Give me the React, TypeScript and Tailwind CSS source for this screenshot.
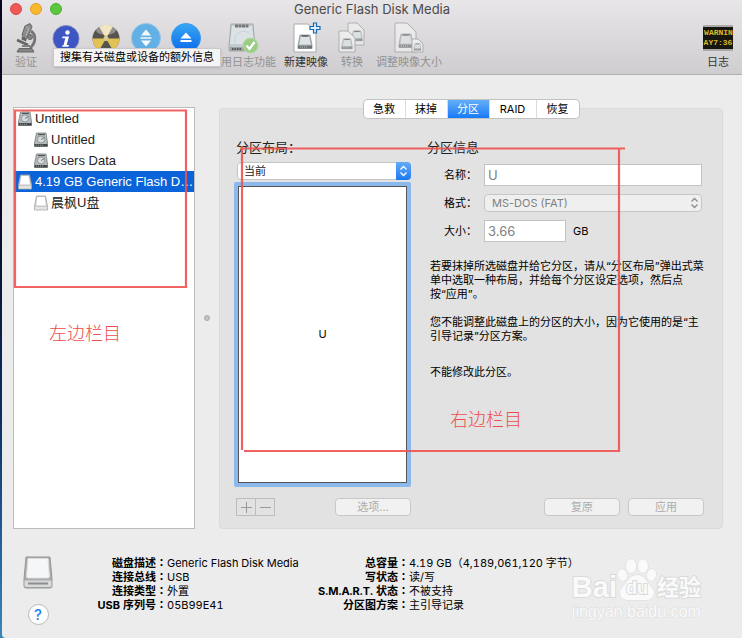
import type { ReactNode } from 'react'

function MicroscopeIcon() {
  return (
    <svg width="26" height="30" viewBox="0 0 26 30" fill="none">
      <path d="M12 3l5-2.500 2 3-4.500 11-5.500-2.500z" fill="#8d8d8d" stroke="#666" />
      <path d="M13 4l3 1.500-3.500 8" stroke="#b5b5b5" />
      <path d="M9 13l5 2-1 3.500-4.500-2z" fill="#666" />
      <path d="M18 8c5.500 4 5 12-1 17" stroke="#757575" strokeWidth="2.800" />
      <circle cx="17" cy="14" r="2.500" fill="#858585" stroke="#666" />
      <path d="M4 17l11 5" stroke="#666" strokeWidth="2.500" />
      <path d="M9 23h8" stroke="#808080" strokeWidth="2" />
      <path d="M4 29l2-3.500h13l2 3.500z" fill="#858585" stroke="#666" />
    </svg>
  )
}

function InfoIcon() {
  return (
    <svg width="28" height="30" viewBox="0 0 28 30">
      <circle cx="14" cy="15.500" r="13" fill="#3d56c4" stroke="#7887bd" />
      <circle cx="15.500" cy="9.500" r="2.200" fill="#fff" />
      <path d="M10.500 13.500h6.500l-2.300 8.500h2.300l-.5 1.800h-6.500l.5-1.500h1l1.800-7h-3.200z" fill="#fff" />
    </svg>
  )
}

function BurnIcon() {
  return (
    <svg width="28" height="30" viewBox="0 0 28 30">
      <circle cx="14" cy="15.500" r="13.500" fill="#56544f" />
      <path d="M14 15.500L7.200 3.800a13.500 13.500 0 0113.600 0z" fill="#ecd9a2" />
      <path d="M14 15.500h13.500a13.500 13.500 0 01-6.700 11.700z" fill="#e2c155" />
      <path d="M14 15.500H.5a13.500 13.500 0 006.700 11.700z" fill="#e2c155" />
      <ellipse cx="14" cy="7" rx="10" ry="5" fill="#fff" opacity=".35" />
      <circle cx="14" cy="15.500" r="2.500" fill="#d9cb91" />
    </svg>
  )
}

function MountIcon() {
  return (
    <svg width="30" height="30" viewBox="0 0 30 30">
      <circle cx="15" cy="15" r="14.500" fill="#62b0e4" stroke="#92c6e8" />
      <path d="M10 12.500l5-6 5 6zM10 17.500l5 6 5-6z" fill="#f3f9fd" />
      <path d="M9.500 15h11" stroke="#f3f9fd" strokeWidth="1.500" />
    </svg>
  )
}

function EjectIcon() {
  return (
    <svg width="30" height="30" viewBox="0 0 30 30">
      <defs>
        <linearGradient id="eject" x2="0" y2="1">
          <stop stopColor="#37a8f5" />
          <stop offset="1" stopColor="#0967ea" />
        </linearGradient>
      </defs>
      <circle cx="15" cy="15" r="14.500" fill="url(#eject)" stroke="#3c97e5" />
      <path d="M9.500 15.500l5.500-6 5.500 6z" fill="#fff" />
      <path d="M9.500 18h11" stroke="#fff" strokeWidth="2" />
    </svg>
  )
}

// internal drive seen from the front, drawn in a 16x16 box
function DriveShape() {
  return (
    <>
      <path d="M3 1h10l2 10v3.500H1V11z" fill="#b5bdc0" stroke="#8d9598" strokeWidth=".8" />
      <path d="M4 2h8l1.500 8.500h-11z" fill="#dfe5e7" />
      <path d="M4.500 2h7" stroke="#555" strokeWidth="1.500" />
      <path d="M1 11.500h14v3H1z" fill="#6d7477" />
      <path d="M3 13h8" stroke="#b9bfc2" strokeDasharray="1 1" />
    </>
  )
}

function JournalIcon() {
  return (
    <svg width="32" height="32" viewBox="0 0 32 32">
      <path d="M4 2h22l2 22v5H2v-5z" fill="#c4cbcd" stroke="#a4aaac" />
      <path d="M5 4h20l2 18H3z" fill="#dce3e6" />
      <path d="M8 4h14" stroke="#777" strokeWidth="3" strokeDasharray="3 .5" />
      <path d="M8 21a9 9 0 0115-9" stroke="#cbd3d6" fill="none" />
      <path d="M3 25h14v4H3z" fill="#9da2a4" />
      <path d="M5 27h10" stroke="#555" strokeWidth="2" strokeDasharray="1.500 1" />
      <circle cx="23.500" cy="23.500" r="7.500" fill="#9bce84" stroke="#b6d8a6" />
      <path d="M19.500 23.500l3 3.500 5-7" stroke="#fff" strokeWidth="2.200" fill="none" />
    </svg>
  )
}

function NewImageIcon() {
  return (
    <svg width="30" height="32" viewBox="0 0 30 32">
      <path d="M3 2h14l8 8v20H3z" fill="#fff" stroke="#aaa" />
      <g transform="translate(6 12)">
        <DriveShape />
      </g>
      <path d="M22.500 1h3v3.500H29v3h-3.500V11h-3V7.500H19v-3h3.500z" fill="#d9efff" stroke="#1767ad" strokeWidth="1.200" />
    </svg>
  )
}

function ConvertIcon() {
  return (
    <svg width="28" height="32" viewBox="0 0 28 32" opacity=".65">
      <path d="M10 1h9l7 7v15H10z" fill="#f3f3f3" stroke="#999" />
      <g transform="translate(13 8) scale(.75)">
        <DriveShape />
      </g>
      <path d="M1 9h9l7 7v14H1z" fill="#f7f7f7" stroke="#999" />
      <g transform="translate(3 16) scale(.75)">
        <DriveShape />
      </g>
    </svg>
  )
}

function ResizeIcon() {
  return (
    <svg width="30" height="32" viewBox="0 0 30 32" opacity=".65">
      <path d="M1 1h12l9 9v20H1z" fill="#f3f3f3" stroke="#999" />
      <g transform="translate(4 11)">
        <DriveShape />
      </g>
      <path d="M18 17h6l5 5v8H18z" fill="#f7f7f7" stroke="#999" />
      <g transform="translate(19.500 21) scale(.5)">
        <DriveShape />
      </g>
    </svg>
  )
}

function LogIcon() {
  return (
    <div className="flex h-[26px] w-[30px] flex-col justify-center overflow-hidden border-y-2 border-[#aaa] bg-[#17170f] font-['Liberation_Mono',monospace] text-[8px] leading-[10px] font-bold whitespace-nowrap text-[#d9b92b]">
      <span className="pl-px">WARNIN</span>
      <span>AY7:36</span>
    </div>
  )
}

function HardDiskIcon() {
  return (
    <svg width="14" height="16" viewBox="0 0 14 16" className="shrink-0">
      <path d="M2.500 1h9.500l1.500 10v3.500H.5V11z" fill="#b3b9bb" stroke="#7a8082" strokeWidth=".8" />
      <path d="M4 2.500h7" stroke="#555" strokeWidth="1.200" />
      <circle cx="7" cy="7.500" r="3.500" fill="#d8dddf" stroke="#878e91" strokeWidth=".8" />
      <path d="M7 7.500l3.500-2" stroke="#777" />
      <path d="M.5 12h13v2.500H.5z" fill="#45494a" />
      <path d="M2 13.200h7" stroke="#9aa0a2" strokeDasharray="1 1" />
    </svg>
  )
}

function FlashIcon() {
  return (
    <svg width="14" height="16" viewBox="0 0 14 16" className="shrink-0">
      <path d="M2.500 1h9l2 10v4H.5v-4z" fill="#c9c9c9" stroke="#aaa" strokeWidth=".8" />
      <path d="M3.300 2h7.400l1.200 8.500H2.100z" fill="#fff" />
      <path d="M1 12h12v2.500H1z" fill="#e4e4e4" />
    </svg>
  )
}

function ExternalDiskIcon() {
  return (
    <svg width="30" height="34" viewBox="0 0 30 34">
      <path d="M3 1h24l2 22v7q0 2-2 2H3q-2 0-2-2v-7z" fill="#a9abac" stroke="#949697" />
      <path d="M5 2.500h20l1.500 18q0 1.500-2 1.500h-19q-2 0-2-1.500z" fill="#f4f6f7" stroke="#dedede" />
      <path d="M1.500 24.500h27v5q0 1.500-1.500 1.500H3q-1.500 0-1.500-1.500z" fill="#d8d9da" />
      <path d="M5 27.500h20" stroke="#8b8d8e" strokeWidth="2" />
    </svg>
  )
}

type ToolProps = { label: string; icon: ReactNode; width?: string; enabled?: boolean; covered?: boolean }

function Tool({ label, icon, width = 'w-10', enabled, covered }: ToolProps) {
  return (
    <button
      aria-label={label}
      className={`flex shrink-0 flex-col items-center text-[11px] leading-4 whitespace-nowrap ${width} ${
        enabled ? 'text-[#333]' : 'text-[#929292]'
      }`}
    >
      <span className="flex h-8 items-center">{icon}</span>
      {!covered && label}
    </button>
  )
}

const DISKS = [
  { name: 'Untitled', icon: <HardDiskIcon /> },
  { name: 'Untitled', icon: <HardDiskIcon />, child: true },
  { name: 'Users Data', icon: <HardDiskIcon />, child: true },
  { name: '4.19 GB Generic Flash D…', icon: <FlashIcon />, selected: true },
  { name: '晨枫U盘', icon: <FlashIcon />, child: true },
]

const TABS = ['急救', '抹掉', '分区', 'RAID', '恢复']

const DISK_INFO = [
  ['磁盘描述', 'Generic Flash Disk Media'],
  ['连接总线', 'USB'],
  ['连接类型', '外置'],
  ['USB 序列号', '05B99E41'],
]

const VOLUME_INFO = [
  ['总容量', '4.19 GB（4,189,061,120 字节）'],
  ['写状态', '读/写'],
  ['S.M.A.R.T. 状态', '不被支持'],
  ['分区图方案', '主引导记录'],
]

function InfoList({ rows, columns }: { rows: string[][]; columns: string }) {
  return (
    <dl className={`grid auto-rows-[14px] content-start text-[11px] leading-[14px] whitespace-nowrap tabular-nums ${columns}`}>
      {rows.map(([label, value]) => (
        <div key={label} className="contents">
          <dt className="text-right font-bold">
            {label}
            <span lang="zh-TW" className="font-[Inter,'Noto_Sans_CJK_TC',sans-serif]">：</span>
          </dt>
          <dd>{value}</dd>
        </div>
      ))}
    </dl>
  )
}

function DisabledButton({ children }: { children: ReactNode }) {
  return (
    <button disabled className="h-[18px] w-[76px] rounded-[4px] border border-[#c8c8c8] bg-[#f1f1f1] text-[11px] leading-4 text-[#acacac]">
      {children}
    </button>
  )
}

function Chevrons({ className }: { className: string }) {
  return (
    <svg width="9" height="12" viewBox="0 0 9 12" fill="none" stroke="currentColor" strokeWidth="1.300" className={className}>
      <path d="M1.500 4.500l3-3 3 3M1.500 7.500l3 3 3-3" />
    </svg>
  )
}

function LayoutColumn() {
  return (
    <section className="flex w-[177px] shrink-0 flex-col">
      <label htmlFor="layout" className="ml-0.5 text-[13px] leading-4 text-[#222]">
        分区布局：
      </label>
      <div className="relative mt-[7px] ml-[3px]">
        <select id="layout" className="block h-[18px] w-full appearance-none rounded-[4px] border border-[#c4c4c4] bg-white pl-1.5 text-[11px] leading-4 text-[#222]">
          <option>当前</option>
        </select>
        <span className="pointer-events-none absolute inset-y-0 right-0 flex w-[15px] items-center justify-center rounded-r-[4px] bg-linear-to-b from-[#62abf8] to-[#1a78f2]">
          <Chevrons className="text-white" />
        </span>
      </div>
      <div className="mt-0.5 flex h-[305px] rounded-[2px] border-4 border-[#8bb9ec]">
        <div className="flex flex-1 items-center justify-center border border-[#555] bg-white text-[11px]">U</div>
      </div>
      <div className="mt-[11px] flex justify-between pl-0.5">
        <div className="flex">
          <button aria-label="添加分区" disabled className="flex h-[18px] w-5 items-center justify-center border border-[#bdbdbd] text-[#999]">
            <svg width="11" height="11" stroke="currentColor">
              <path d="M0 5.500h11M5.500 0v11" />
            </svg>
          </button>
          <button aria-label="移除分区" disabled className="-ml-px flex h-[18px] w-5 items-center justify-center border border-[#bdbdbd] text-[#999]">
            <svg width="11" height="11" stroke="currentColor">
              <path d="M0 5.500h11" />
            </svg>
          </button>
        </div>
        <DisabledButton>选项…</DisabledButton>
      </div>
    </section>
  )
}

function DetailsColumn() {
  return (
    <section className="flex min-w-0 flex-1 flex-col">
      <h2 className="text-[13px] leading-4 text-[#222]">分区信息</h2>
      <div className="mt-[9px] mr-0.5 grid grid-cols-[50px_1fr] items-center gap-x-[7px] gap-y-2 text-[11px]">
        <label htmlFor="name" className="text-right">名称：</label>
        <input id="name" readOnly value="U" className="h-[22px] w-full min-w-0 border border-[#c3c3c3] bg-white px-[3px] text-[13px] text-[#808080]" />
        <label htmlFor="format" className="text-right">格式：</label>
        <div className="relative">
          <select id="format" disabled className="block h-[18px] w-full appearance-none rounded-[4px] border border-[#c6c6c6] bg-[#efefef] pl-[7px] leading-4 text-[#808080] opacity-100">
            <option>MS-DOS (FAT)</option>
          </select>
          <Chevrons className="pointer-events-none absolute top-[3px] right-[3px] text-[#8c8c8c]" />
        </div>
        <label htmlFor="size" className="text-right">大小：</label>
        <div className="flex items-center gap-[7px]">
          <input id="size" readOnly value="3.66" className="h-[22px] w-[82px] border border-[#c3c3c3] bg-white px-[3px] text-[13px] text-[#808080]" />
          <span>GB</span>
        </div>
      </div>
      <div className="mt-[17px] ml-[3px] text-[11px] leading-[14px]">
        <p>
          若要抹掉所选磁盘并给它分区，请从“分区布局”弹出式菜单中选取一种布局，并给每个分区设定选项，然后点
          <span className="whitespace-nowrap">按“应用”。</span>
        </p>
        <p className="mt-3.5">您不能调整此磁盘上的分区的大小，因为它使用的是“主引导记录”分区方案。</p>
        <p className="mt-[22px]">不能修改此分区。</p>
      </div>
      <div className="mt-auto flex justify-end gap-2">
        <DisabledButton>复原</DisabledButton>
        <DisabledButton>应用</DisabledButton>
      </div>
    </section>
  )
}

function Annotations() {
  return (
    <div className="pointer-events-none absolute inset-0 text-[18px] leading-6 font-light text-[#ee4c4c]">
      <svg width="742" height="638" viewBox="0 0 742 638" fill="none" stroke="#ef5350" strokeWidth="2.200" className="absolute top-0 left-0" opacity=".9">
        <path d="M15 110.500h171V287H15z" />
        <path d="M242 148.500h383M619 148.500V451H244M242 146v304" />
      </svg>
      <span className="absolute top-[322px] left-[49px]">左边栏目</span>
      <span className="absolute top-[408px] left-[450px]">右边栏目</span>
    </div>
  )
}

function Watermark() {
  return (
    <div className="pointer-events-none absolute right-[41px] bottom-4 flex flex-col items-start font-bold text-[#fafafa] [-webkit-text-stroke:2px_#dadada] [paint-order:stroke_fill]">
      <div className="flex items-end">
        <span className="font-['Liberation_Sans',sans-serif] text-[29px] leading-[30px]">Bai</span>
        <div className="relative h-[44px] w-10">
          <svg width="40" height="44" viewBox="0 0 40 44" fill="#fafafa" stroke="#dadada">
            <ellipse cx="5.500" cy="17" rx="4.500" ry="6" transform="rotate(-15 5.500 17)" />
            <ellipse cx="14" cy="8" rx="5" ry="7" />
            <ellipse cx="26" cy="8" rx="5" ry="7" />
            <ellipse cx="34.500" cy="17" rx="4.500" ry="6" transform="rotate(15 34.500 17)" />
            <path d="M20 17c6 0 8 4 11 8s7 6 6 11c-1 5-5 6-9 6H12c-5 0-8-2-9-6s3-7 6-11 5-8 11-8z" />
          </svg>
          <span className="absolute inset-x-0 bottom-1 text-center font-['Liberation_Sans',sans-serif] text-[18px] leading-5">du</span>
        </div>
        <span className="text-[22px] leading-[30px]">经验</span>
      </div>
      <span className="font-['Liberation_Sans',sans-serif] text-[16px] leading-5 font-normal [-webkit-text-stroke:1px_#dcdcdc]">jingyan.baidu.com</span>
    </div>
  )
}

export default function App() {
  return (
    <div
      lang="zh-CN"
      className="relative flex min-h-screen bg-linear-to-b from-[#070720] from-30% via-[#0a3065] via-65% to-[#3b86b8] pl-0.5 font-[Inter,'Noto_Sans_CJK_SC',sans-serif] text-black"
    >
      <div className="flex min-w-0 flex-1 flex-col rounded-bl-[4px] bg-[#ececec]">
        <header className="relative h-[75px] border-b border-[#b0b0b0] bg-linear-to-b from-[#e8e6e8] to-[#cfcdcf]">
          <div className="relative flex h-[22px] items-start justify-center">
            <div className="absolute top-[3px] left-2 flex gap-2">
              <button aria-label="关闭" className="size-3 rounded-full border border-[#d84a47] bg-[#ee5a55]" />
              <button aria-label="最小化" className="size-3 rounded-full border border-[#dfa023] bg-[#f8b82e]" />
              <button aria-label="缩放" className="size-3 rounded-full border border-[#4aae31] bg-[#5cc83e]" />
            </div>
            <h1 className="text-[13px] leading-[19px] text-[#4b4b4b]">Generic Flash Disk Media</h1>
          </div>
          <div className="flex pl-1">
            <Tool label="验证" icon={<MicroscopeIcon />} />
            <Tool label="简介" icon={<InfoIcon />} covered />
            <Tool label="刻录" icon={<BurnIcon />} covered />
            <Tool label="装载" icon={<MountIcon />} covered />
            <Tool label="推出" icon={<EjectIcon />} covered />
            <Tool label="启用日志功能" icon={<JournalIcon />} width="w-[74px]" />
            <Tool label="新建映像" icon={<NewImageIcon />} width="w-[52px]" enabled />
            <Tool label="转换" icon={<ConvertIcon />} />
            <Tool label="调整映像大小" icon={<ResizeIcon />} width="w-[74px]" />
            <div className="ml-auto">
              <Tool label="日志" icon={<LogIcon />} width="w-12" enabled />
            </div>
          </div>
          <div role="tooltip" className="absolute top-12 left-[51px] border border-[#c9c9c9] bg-[#f4f4f4] px-1.5 text-[11px] leading-[17px] whitespace-nowrap shadow-sm">
            搜集有关磁盘或设备的额外信息
          </div>
        </header>

        <main className="flex pt-8 pr-[19px] pl-[11px]">
          <ul className="w-[182px] shrink-0 border border-[#bcbcbc] bg-white font-['Liberation_Sans','Noto_Sans_CJK_SC',sans-serif] text-[13px]">
            {DISKS.map((disk, i) => (
              <li
                key={i}
                className={`flex h-[21px] items-center gap-[3px] whitespace-nowrap ${disk.child ? 'pl-5' : 'pl-1'} ${
                  disk.selected ? 'bg-[#0a63d9] text-white' : 'text-[#222]'
                }`}
              >
                {disk.icon}
                {disk.name}
              </li>
            ))}
          </ul>
          <div className="flex w-6 shrink-0 items-center justify-center">
            <span className="size-1.5 rounded-full border border-[#aaa] bg-[#c4c4c4]" />
          </div>
          <div className="mt-px flex min-w-0 flex-1 flex-col rounded-[4px] border border-[#dadada] bg-[#e2e2e2] pr-[18px] pb-3 pl-3.5">
            <div role="tablist" className="-mt-[9px] mr-[-4px] flex h-[18px] self-center overflow-hidden rounded-[4px] bg-white text-[11px] shadow-[0_0_0_1px_#c2c2c2]">
              {TABS.map((tab) => (
                <button
                  key={tab}
                  role="tab"
                  aria-selected={tab === '分区'}
                  className={`border-r border-[#dcdcdc] leading-[18px] last:border-r-0 ${tab === 'RAID' ? 'w-[47px]' : 'w-[42px]'} ${
                    tab === '分区' ? 'bg-linear-to-b from-[#62aefa] to-[#1479f6] text-white' : ''
                  }`}
                >
                  {tab}
                </button>
              ))}
            </div>
            <div className="mt-[21px] flex gap-4">
              <LayoutColumn />
              <DetailsColumn />
            </div>
          </div>
        </main>

        <footer className="flex pt-[27px] pl-[21px]">
          <div className="flex w-[30px] shrink-0 flex-col items-center gap-3.5">
            <ExternalDiskIcon />
            <button aria-label="帮助" className="size-[21px] rounded-full border border-[#b9b9b9] bg-white text-[15px] leading-[19px] font-medium text-[#1b82f5]">
              ?
            </button>
          </div>
          <InfoList rows={DISK_INFO} columns="grid-cols-[114px_140px]" />
          <InfoList rows={VOLUME_INFO} columns="grid-cols-[102px_auto]" />
        </footer>
      </div>
      <Annotations />
      <Watermark />
    </div>
  )
}
